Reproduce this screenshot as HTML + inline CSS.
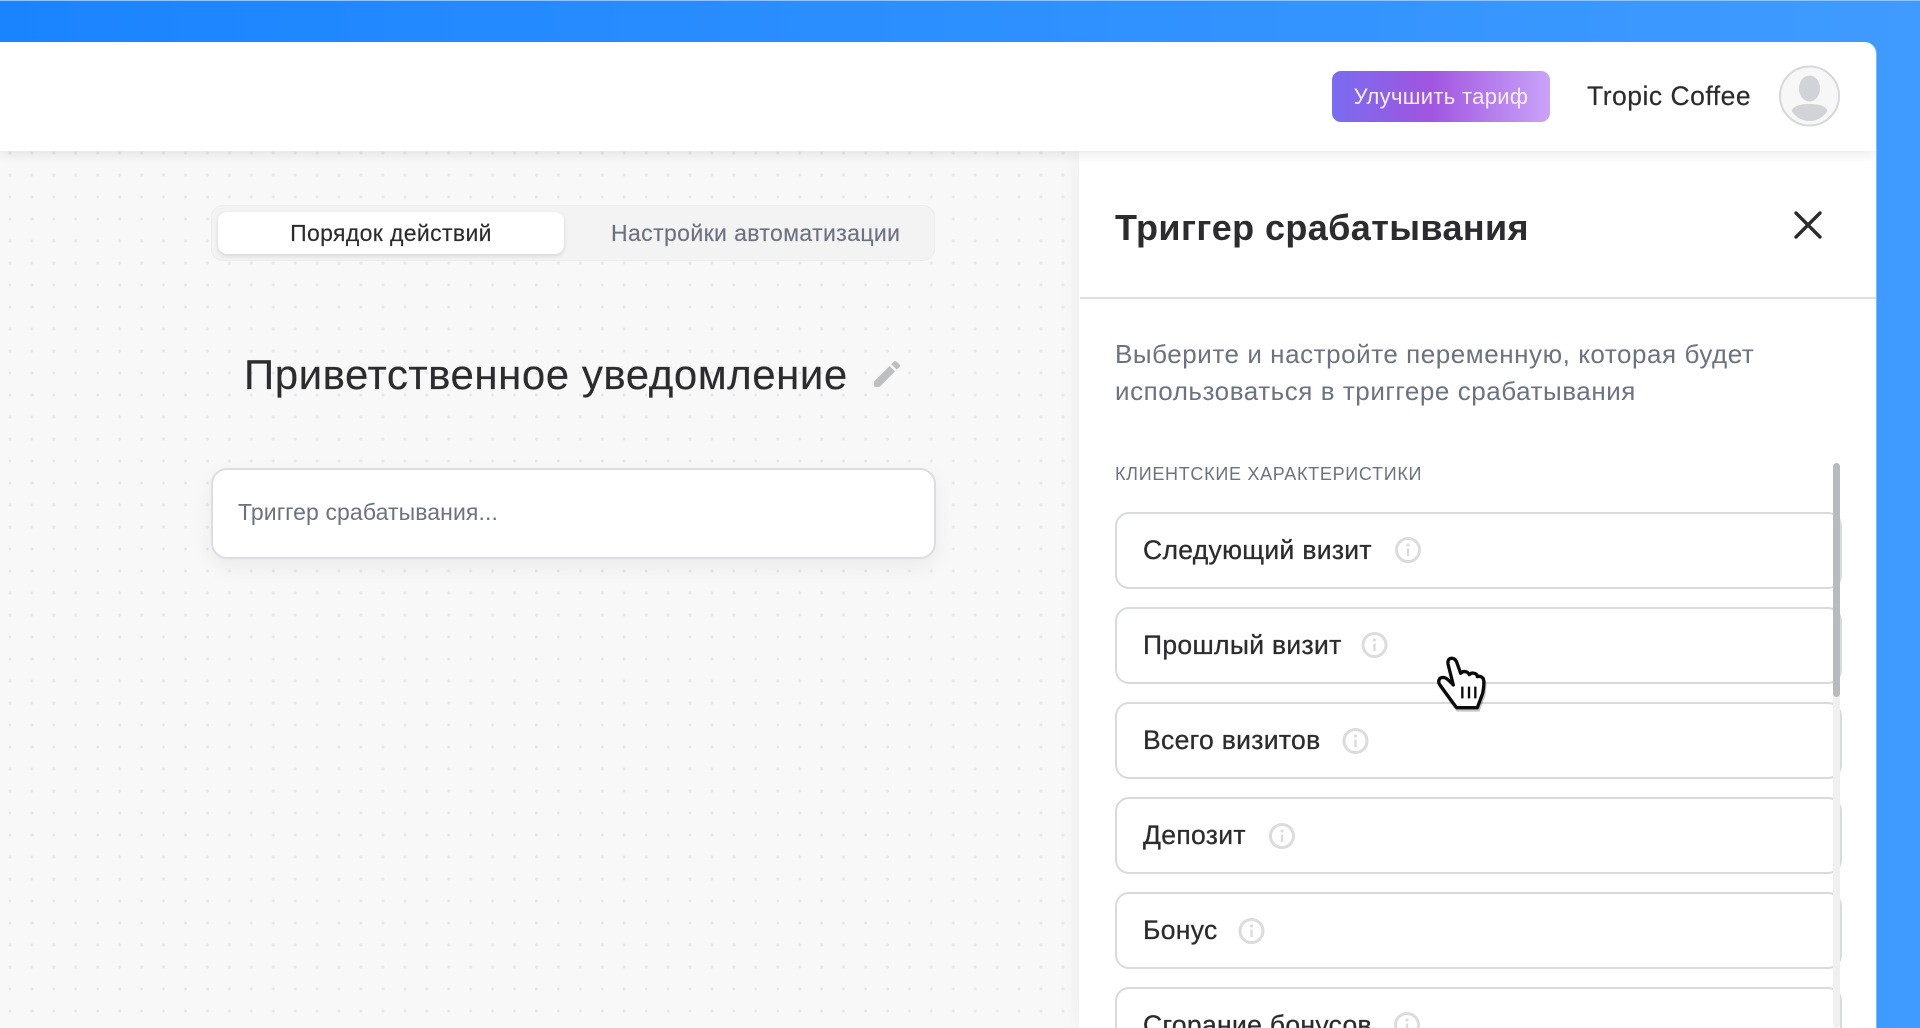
<!DOCTYPE html>
<html lang="ru">
<head>
<meta charset="utf-8">
<title>Триггер срабатывания</title>
<style>
html,body{margin:0;padding:0;width:1920px;height:1028px;overflow:hidden}
body{position:relative;font-family:"Liberation Sans","Noto Sans CJK SC",sans-serif;color:#2c2c2e;background:#3f9bff}
.a{position:absolute;white-space:nowrap}
.bg{left:0;top:0;width:1920px;height:1028px;background:linear-gradient(90deg,#1a84ff 0%,#3f9bff 100%)}
.topline{left:0;top:0;width:1920px;height:1px;background:#8ec4ff}
.card{left:0;top:42px;width:1876px;height:986px;background:#fff;border-top-right-radius:12px;overflow:hidden;box-shadow:1px 0 0 #7dbbff}
.main{left:0;top:109px;width:1080px;height:877px;background-color:#f8f8f9;background-image:radial-gradient(circle at center,#e7e7e9 0,#e7e7e9 1.2px,rgba(231,231,233,0) 1.9px);background-size:21.95px 22px;background-position:-1px -9px}
.panel{left:1079px;top:109px;width:797px;height:877px;background:#fff;box-shadow:0 0 24px rgba(0,0,0,.05)}
.header{left:0;top:0;width:1876px;height:109px;background:#fff;box-shadow:0 3px 12px rgba(0,0,0,.09)}
.btn{left:1332px;top:71px;width:218px;height:51px;border-radius:9px;background:linear-gradient(90deg,#7a6cf0 0%,#a055e0 45%,#c9a3f9 100%);color:#f4eefd;font-size:22px;line-height:51px;text-align:center;letter-spacing:.33px}
.user{left:1587px;top:78px;font-size:26.5px;line-height:36px;letter-spacing:.5px;-webkit-text-stroke:.2px #2c2c2e}
.tabs{left:211px;top:205px;width:722px;height:54px;background:#f3f3f4;border:1px solid #ececee;border-radius:12px}
.tab1{left:218px;top:212px;width:346px;height:42px;background:#fff;border-radius:9px;box-shadow:0 2px 5px rgba(0,0,0,.12);font-size:23px;line-height:42px;text-align:center;letter-spacing:.36px;-webkit-text-stroke:.15px #2c2c2e}
.tab2{left:611px;top:212px;font-size:23px;line-height:42px;color:#6b7280;letter-spacing:.39px;-webkit-text-stroke:.15px #6b7280}
.h1{left:244px;top:351px;font-size:42px;line-height:48px;letter-spacing:.54px;-webkit-text-stroke:.15px #2c2c2e}
.inp{left:211px;top:468px;width:721px;height:87px;background:#fff;border:2px solid #dcdee3;border-radius:16px;box-shadow:0 8px 22px rgba(0,0,0,.06)}
.ph{left:238px;top:497px;font-size:23px;line-height:30px;color:#6b7280;letter-spacing:.1px}
.title{left:1115px;top:205px;font-size:36px;line-height:46px;font-weight:bold;letter-spacing:.4px;color:#2c2c2e}
.div{left:1080px;top:297px;width:796px;height:2px;background:#dcdee3}
.sub{left:1115px;font-size:26px;line-height:36px;color:#6b7280;letter-spacing:.55px}
.lab{left:1115px;top:461px;font-size:18px;line-height:26px;color:#6b7280;letter-spacing:.7px}
.row{left:1115px;width:723px;height:73px;border:2px solid #d9dade;border-radius:14px;background:#fff}
.t{left:1143px;font-size:26.5px;line-height:36px;letter-spacing:.32px;-webkit-text-stroke:.3px #2c2c2e}
.track{left:1833px;top:463px;width:7px;height:565px;background:#f0f0f1;border-radius:4px}
.thumb{left:1833px;top:463px;width:7px;height:234px;background:#b9babd;border-radius:4px}
svg{position:absolute;overflow:visible}
</style>
</head>
<body>
<div class="a bg"></div>
<div class="a topline"></div>
<div class="a card">
  <div class="a main"></div>
  <div class="a panel"></div>
  <div class="a header"></div>
</div>

<div class="a btn">Улучшить тариф</div>
<div class="a user">Tropic Coffee</div>
<svg style="left:1779px;top:65px" width="62" height="62" viewBox="0 0 62 62">
  <circle cx="30.5" cy="31" r="29.5" fill="#f7f7f8" stroke="#d8d8da" stroke-width="2"/>
  <ellipse cx="30.5" cy="23.5" rx="10.500" ry="13" fill="#d2d3d6"/>
  <path d="M12.500 46C14 41 21 39 30.5 39S47 41 48.500 46C44 52.500 38 56 30.5 56S17 52.500 12.500 46Z" fill="#d2d3d6"/>
</svg>

<div class="a tabs"></div>
<div class="a tab1">Порядок действий</div>
<div class="a tab2">Настройки автоматизации</div>

<div class="a h1">Приветственное уведомление</div>
<svg style="left:873px;top:360px" width="28" height="28" viewBox="0 0 24 24">
  <path d="M1 23v-4.700L14.200 5.100l4.700 4.700L5.700 23H1ZM15.700 3.600l2.300-2.300c.6-.6 1.500-.6 2.100 0l2.600 2.600c.6.6.6 1.500 0 2.100l-2.300 2.300-4.700-4.700Z" fill="#bdbec2"/>
</svg>

<div class="a inp"></div>
<div class="a ph">Триггер срабатывания...</div>

<div class="a title">Триггер срабатывания</div>
<svg style="left:1793px;top:210px" width="30" height="30" viewBox="0 0 30 30">
  <path d="M3 3L27 27M27 3L3 27" stroke="#2c2c2e" stroke-width="3.400" stroke-linecap="round" fill="none"/>
</svg>
<div class="a div"></div>

<div class="a sub" style="top:336px">Выберите и настройте переменную, которая будет</div>
<div class="a sub" style="top:373px">использоваться в триггере срабатывания</div>
<div class="a lab">КЛИЕНТСКИЕ ХАРАКТЕРИСТИКИ</div>

<div class="a row" style="top:512px"></div>
<div class="a row" style="top:607px"></div>
<div class="a row" style="top:702px"></div>
<div class="a row" style="top:797px"></div>
<div class="a row" style="top:892px"></div>
<div class="a row" style="top:987px"></div>

<div class="a t" style="top:532px">Следующий визит</div>
<div class="a t" style="top:627px">Прошлый визит</div>
<div class="a t" style="top:722px">Всего визитов</div>
<div class="a t" style="top:817px">Депозит</div>
<div class="a t" style="top:912px">Бонус</div>
<div class="a t" style="top:1007px">Сгорание бонусов</div>

<svg style="left:0;top:0" width="1920" height="1028" viewBox="0 0 1920 1028">
  <defs>
    <g id="inf">
      <circle r="11.500" fill="none" stroke="#dcdcde" stroke-width="3"/>
      <circle cy="-5" r="1.600" fill="#dcdcde"/>
      <path d="M0-1.500V6" stroke="#dcdcde" stroke-width="2.400" fill="none"/>
    </g>
  </defs>
  <use href="#inf" x="1408" y="550"/>
  <use href="#inf" x="1374.500" y="645"/>
  <use href="#inf" x="1355.500" y="741"/>
  <use href="#inf" x="1282" y="836"/>
  <use href="#inf" x="1251.500" y="931"/>
  <use href="#inf" x="1407" y="1025"/>
</svg>

<div class="a track"></div>
<div class="a thumb"></div>

<svg style="left:1420px;top:640px" width="90" height="80" viewBox="0 0 270 240">
  <path d="M100 135L84 72Q82 54 97 55Q108 56 112 72L122 100Q128 92 140 96Q145 98 148 104Q155 96 166 101Q172 104 172 110Q182 106 190 116Q194 130 188 160L172 203H110L100 190L60 135Q52 125 60 115Q72 108 85 120L100 135Z" fill="#000" opacity=".22" transform="translate(3 7)" stroke="#000" stroke-width="10"/>
  <path d="M100 135L84 72Q82 54 97 55Q108 56 112 72L122 100Q128 92 140 96Q145 98 148 104Q155 96 166 101Q172 104 172 110Q182 106 190 116Q194 130 188 160L172 203H110L100 190L60 135Q52 125 60 115Q72 108 85 120L100 135Z" fill="#fff" stroke="#0b0b0b" stroke-width="10" stroke-linejoin="round"/>
  <path d="M127 140V175M147 140V175M166 140V175" stroke="#0b0b0b" stroke-width="7" fill="none"/>
</svg>
</body>
</html>
